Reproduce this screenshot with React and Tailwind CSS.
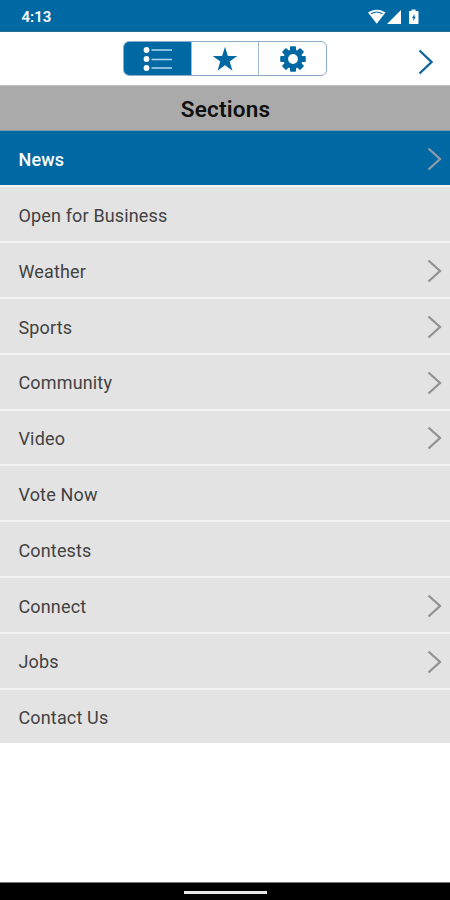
import React from 'react';

const sections = [
  { label: 'News', hasChildren: true, active: true },
  { label: 'Open for Business' },
  { label: 'Weather', hasChildren: true },
  { label: 'Sports', hasChildren: true },
  { label: 'Community', hasChildren: true },
  { label: 'Video', hasChildren: true },
  { label: 'Vote Now' },
  { label: 'Contests' },
  { label: 'Connect', hasChildren: true },
  { label: 'Jobs', hasChildren: true },
  { label: 'Contact Us' },
];

const StatusBar = () => (
  <div className="flex h-8 items-center justify-between border-b border-[#2a6a96] bg-[#0069a4] pl-[21.5px] pr-[30px] pt-[2px] text-white">
    <span className="pt-px text-[15px] font-semibold leading-none">4:13</span>
    <svg className="h-4 w-[52px]" viewBox="0 0 52 16" fill="currentColor">
      {/* Wifi */}
      <path d="M0 3.6C5 -.3 12.5 -.3 17.5 3.6L8.75 14.8Z" />
      <path d="M3 4.7C6.5 2.6 11 2.6 14.5 4.7" fill="none" stroke="#0069a4" strokeWidth="1.1" />
      {/* Signal */}
      <path d="M33 1V15H19Z" />
      {/* Battery */}
      <path d="M43.500 .5h4V2h2.200q.8 0 .8.8V14.200q0 .8-.8.8H41.800q-.8 0-.8-.8V2.800q0-.8.8-.8H43.500Z" />
      <path d="M46.400 5 44 9.100h1.400v3L47.700 7.800h-1.300Z" fill="#0069a4" />
    </svg>
  </div>
);

const TabBar = () => (
  <div className="grid h-[53px] grid-cols-[1fr_204px_1fr] items-center bg-white">
    <div />
    <div className="grid h-[35px] grid-cols-[68px_1fr_1fr] divide-x divide-[#a3b9d0] overflow-hidden rounded-[6px] border border-[#8fabc8]">
      <button className="flex items-center justify-center bg-[#0069a4]">
        <svg className="h-[26px] w-[30px]" viewBox="0 0 30 26">
          <g fill="#fff">
            <circle cx="3.500" cy="4" r="2.900" />
            <circle cx="3.500" cy="13" r="2.900" />
            <circle cx="3.500" cy="22" r="2.900" />
          </g>
          <path d="M8.500 4H29M8.500 13.500H29M8.500 22H29" stroke="#b5d7ee" strokeWidth="1.700" />
        </svg>
      </button>
      <button className="flex items-center justify-center pt-px">
        <svg className="h-[26px] w-[26px]" viewBox="0 0 26 26" fill="#0069a4">
          <path d="M13 .7 15.900 10H25.300L17.700 15.500 20.500 24.800 13 19.200 5.500 24.800 8.300 15.500.7 10H10.100Z" />
        </svg>
      </button>
      <button className="flex items-center justify-center">
        <svg className="h-[26px] w-[26px]" viewBox="-13 -13 26 26">
          <g fill="#0069a4">
            <rect x="-3" y="-12.800" width="6" height="25.600" rx="1" />
            <rect x="-3" y="-12.800" width="6" height="25.600" rx="1" transform="rotate(45)" />
            <rect x="-3" y="-12.800" width="6" height="25.600" rx="1" transform="rotate(90)" />
            <rect x="-3" y="-12.800" width="6" height="25.600" rx="1" transform="rotate(135)" />
            <circle r="9.600" />
          </g>
          <circle r="4.900" fill="#fff" />
        </svg>
      </button>
    </div>
    <button className="mr-[17px] mt-[6px] justify-self-end">
      <svg className="h-[26px] w-4" viewBox="0 0 16 26" fill="none" stroke="#0d65a0" strokeWidth="2.300">
        <path d="M2.500 1.500 14.500 13 2.500 24.500" />
      </svg>
    </button>
  </div>
);

const SectionRow = ({ label, hasChildren, active }) => (
  <li
    className={`flex items-center justify-between pl-[18.5px] pr-2 text-[18px] leading-none tracking-[0.15px] ${
      active
        ? 'h-[54.2px] bg-[#0069a4] font-medium text-white'
        : 'h-[55.83px] border-t-2 border-[#f3f3f3] bg-[#e3e3e3] text-[#424242]'
    }`}
  >
    <span className="pt-[3.5px]">{label}</span>
    {hasChildren && (
      <svg className="mt-[2px] h-6 w-[15px]" viewBox="0 0 15 24" fill="none" stroke={active ? '#8d9ba6' : '#929292'} strokeWidth="2.300">
        <path d="M1.500 1.500 13 12 1.500 22.500" />
      </svg>
    )}
  </li>
);

const App = () => {
  return (
    <div className="flex h-[900px] w-[450px] flex-col bg-white font-[Roboto,sans-serif]">
      <StatusBar />
      <TabBar />
      <div className="flex h-[46px] items-center justify-center border-b border-t border-b-[#8095a8] border-t-[#c4c4c4] bg-[#aaaaaa]">
        <h1 className="pl-px pt-[2px] text-[22.5px] font-semibold leading-none tracking-[0.2px] text-[#101010]">Sections</h1>
      </div>
      <ul>
        {sections.map((section) => (
          <SectionRow key={section.label} {...section} />
        ))}
      </ul>
      {/* Gesture navigation */}
      <div className="mt-auto flex h-[18px] items-center justify-center border-t border-[#777777] bg-black pt-px">
        <div className="h-[3px] w-[83px] bg-[#e8e8e8]" />
      </div>
    </div>
  );
};

export default App;
